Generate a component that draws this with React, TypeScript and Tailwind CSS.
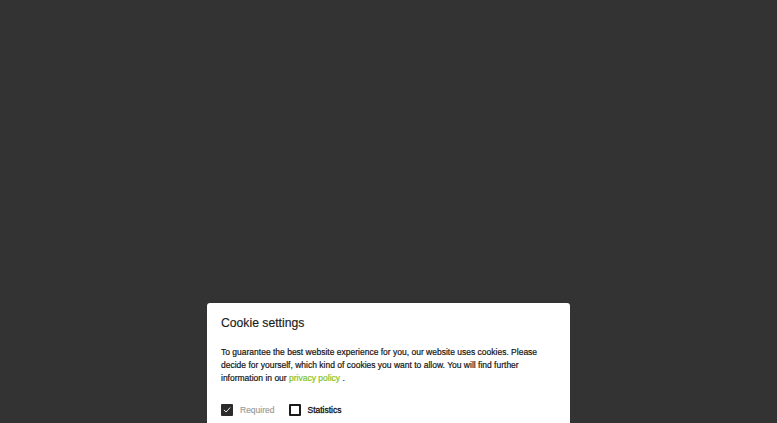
import React from "react";

export default function App() {
  return (
    <div
      className="h-[423px] w-full overflow-hidden bg-[#333333] flex justify-center pt-[303px]"
      style={{ fontFamily: '"Liberation Sans", Arial, sans-serif' }}
    >
      <div className="w-[363px] shrink-0 bg-white rounded-[3px] px-[14px] pt-[12px] pb-[20px] h-[200px]">
        <h2 className="text-[12.2px] leading-[16px] text-[#1a1a1a] font-normal [-webkit-text-stroke:0.15px_#1a1a1a]">
          Cookie settings
        </h2>
        <p className="mt-[15px] text-[8.5px] leading-[13px] text-[#151515] [-webkit-text-stroke:0.2px_#151515]">
          To guarantee the best website experience for you, our website uses cookies. Please decide for
          yourself, which kind of cookies you want to allow. You will find further information in our{" "}
          <a className="text-[#86c31c] [-webkit-text-stroke:0.2px_#86c31c]">privacy policy</a> .
        </p>
        <div className="mt-[19px] flex items-center">
          <label className="flex items-center gap-[7px]">
            <span className="w-[12px] h-[12px] rounded-[1px] bg-[#2b2b2b] flex items-center justify-center">
              <svg width="8" height="8" viewBox="0 0 8 8" fill="none">
                <path d="M1.2 4.2 L3.1 6 L6.9 1.8" stroke="white" strokeWidth="0.9" strokeLinecap="round" strokeLinejoin="round" />
              </svg>
            </span>
            <span className="text-[8.5px] leading-[12px] text-[#9a9a9a] [-webkit-text-stroke:0.15px_#9a9a9a]">Required</span>
          </label>
          <label className="ml-[14px] flex items-center gap-[7px]">
            <span className="w-[12px] h-[12px] rounded-[1px] border-[2px] border-[#1a1a1a] bg-white" />
            <span className="text-[8.5px] leading-[12px] text-[#111111] [-webkit-text-stroke:0.3px_#111111]">Statistics</span>
          </label>
        </div>
      </div>
    </div>
  );
}
